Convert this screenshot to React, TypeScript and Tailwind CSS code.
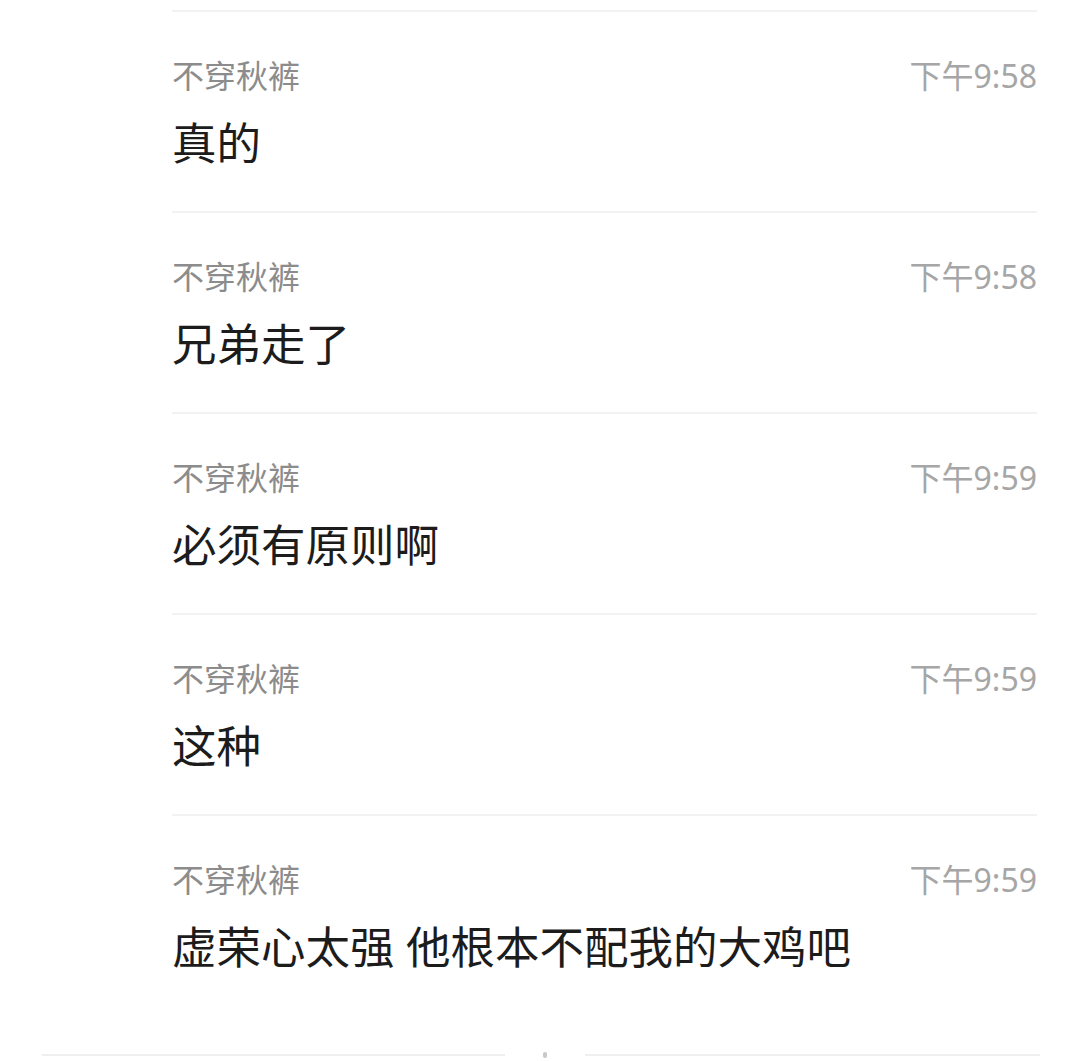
const messages = [
  { name: "不穿秋裤", time: "下午9:58", text: "真的" },
  { name: "不穿秋裤", time: "下午9:58", text: "兄弟走了" },
  { name: "不穿秋裤", time: "下午9:59", text: "必须有原则啊" },
  { name: "不穿秋裤", time: "下午9:59", text: "这种" },
  { name: "不穿秋裤", time: "下午9:59", text: "虚荣心太强 他根本不配我的大鸡吧" },
];

export default function App() {
  return (
    <div
      className="w-[1080px] h-[1061px] bg-white overflow-hidden flex flex-col"
      style={{ fontFamily: '"Noto Sans", "Noto Sans CJK SC", sans-serif' }}
    >
      {/* 聊天记录列表 */}
      <div className="pl-[172px] pr-[43px] pt-[10px]">
        {messages.map((m, i) => (
          <div key={i} className="border-t-2 border-[#f2f2f2] pt-[48px] pb-[46px]">
            <div className="flex items-center justify-between h-[32px]">
              <span className="text-[32px] leading-[32px] text-[#8c8c8c]">{m.name}</span>
              <span className="text-[32px] leading-[32px] text-[#a6a6a6]">{m.time}</span>
            </div>
            <div className="mt-[29px] text-[44.5px] leading-[44px] text-[#1c1c1c]">{m.text}</div>
          </div>
        ))}
      </div>

      {/* 底部分隔线 */}
      <div className="mt-[37px] flex items-center pl-[42px] pr-[40px]">
        <div className="h-[2px] w-[463px] bg-[#efefef]" />
        <div className="flex-1 flex justify-center">
          <div className="w-[4px] h-[6px] rounded-full bg-[#c8c8c8]" />
        </div>
        <div className="h-[2px] w-[455px] bg-[#efefef]" />
      </div>
    </div>
  );
}
